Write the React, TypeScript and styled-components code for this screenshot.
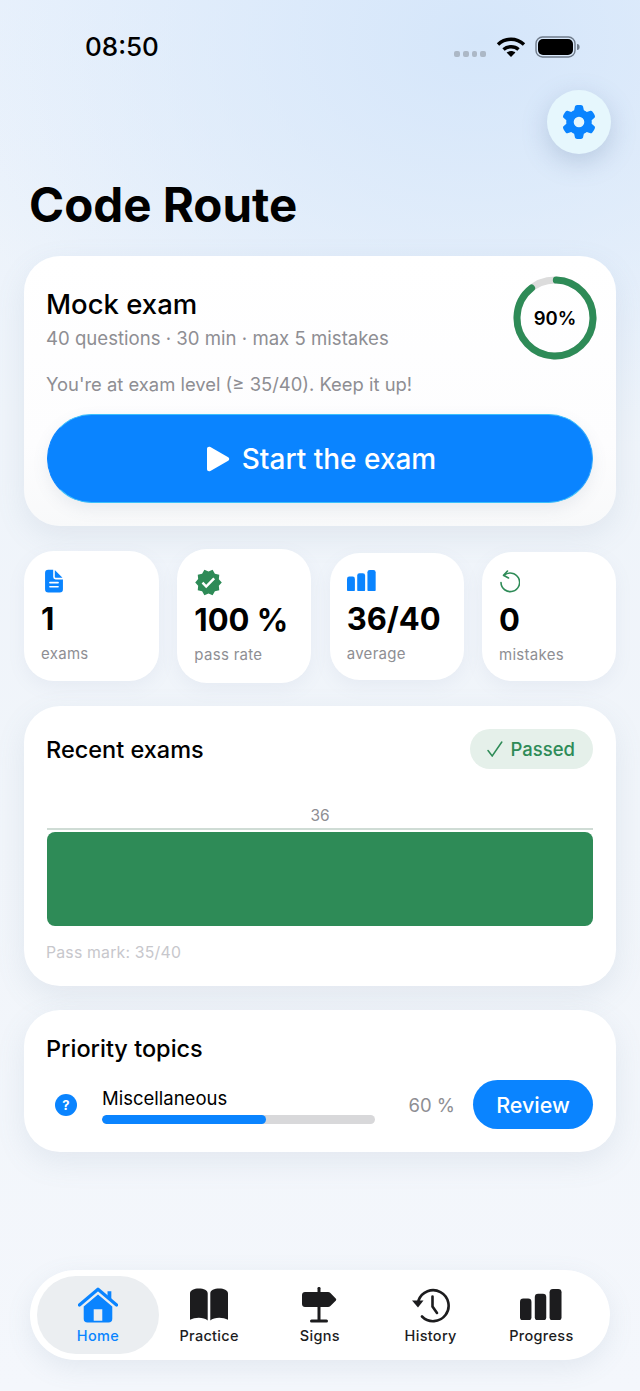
import React from 'react';
import styled, { createGlobalStyle } from 'styled-components';
import { FaGear } from 'react-icons/fa6';
import { MdVerified } from 'react-icons/md';
import { IoDocumentText } from 'react-icons/io5';

const blue = '#0a84ff';
const green = '#2e8b57';
const grey = '#8e8e93';

const GlobalStyle = createGlobalStyle`
	html, body {
		margin: 0;
		padding: 0;
		height: 100%;
	}
	body {
		font-family: 'Inter', 'Liberation Sans', sans-serif;
		color: #000;
		background: #f4f7fc;
	}
	* {
		box-sizing: border-box;
	}
`;

const Page = styled.div`
	width: 640px;
	height: 1391px;
	overflow: hidden;
	display: flex;
	flex-direction: column;
	background:
		radial-gradient(ellipse 560px 420px at 480px 40px, #d5e6fa 0%, rgba(213, 230, 250, 0) 100%),
		linear-gradient(180deg, #eaf2fc 0%, #eff4fa 30%, #f1f5fa 60%, #f4f7fc 100%);
`;

const StatusBar = styled.div`
	height: 90px;
	padding: 31px 59px 0 85px;
	display: flex;
	justify-content: space-between;
	align-items: flex-start;
`;

const Clock = styled.div`
	font-size: 26px;
	line-height: 32px;
	font-weight: 500;
`;

const StatusIcons = styled.div`
	display: flex;
	align-items: center;
	gap: 9px;
	height: 32px;
`;

const SignalDots = styled.div`
	display: flex;
	gap: 3px;
	margin-top: 14px;
	margin-right: 1px;
`;

const SignalDot = styled.span`
	width: 5.75px;
	height: 6px;
	border-radius: 2px;
	background: #acb8c6;
`;

const HeaderRow = styled.div`
	display: flex;
	justify-content: flex-end;
	padding-right: 29px;
`;

const GearButton = styled.div`
	width: 64px;
	height: 64px;
	border-radius: 50%;
	background: #e6f7fd;
	color: ${blue};
	display: flex;
	align-items: center;
	justify-content: center;
	box-shadow: 0 8px 26px rgba(90, 120, 160, 0.28);
`;

const Title = styled.h1`
	margin: 23px 0 23px 29px;
	font-size: 47.5px;
	line-height: 56px;
	font-weight: 700;
`;

const Card = styled.section`
	margin: 0 24px;
	padding: 23px;
	background: #fff;
	border-radius: 36px;
	box-shadow: 0 10px 30px rgba(110, 130, 160, 0.12);
`;

const ExamCard = styled(Card)`
	height: 270px;
	background: linear-gradient(180deg, #fff 0%, #fdfdfe 70%, #f8f9fa 100%);
`;

const ExamTop = styled.div`
	display: flex;
	justify-content: space-between;
	height: 93px;
`;

const CardTitle = styled.h2<{ $size?: number }>`
	margin: 0;
	font-size: ${(p) => p.$size || 23.5}px;
	line-height: 30px;
	font-weight: 500;
	margin-left: -1px;
`;

const ExamHead = styled.div`
	padding-top: 10px;
`;

const Meta = styled.div`
	margin-top: 7px;
	margin-left: -1px;
	font-size: 18.6px;
	line-height: 24px;
	color: ${grey};
`;

const Ring = styled.div`
	position: relative;
	width: 84px;
	height: 84px;
	margin: -3px -4px 0 0;
`;

const RingLabel = styled.div`
	position: absolute;
	inset: 0;
	display: flex;
	align-items: center;
	justify-content: center;
	font-size: 18.5px;
	font-weight: 600;
`;

const Hint = styled.div`
	margin-left: -1px;
	font-size: 18.4px;
	line-height: 24px;
	color: ${grey};
`;

const StartButton = styled.div`
	margin-top: 18px;
	height: 89px;
	padding-left: 2px;
	border-radius: 45px;
	background: ${blue};
	border: 1px solid #3cc0fb;
	border-left-color: ${blue};
	border-right-color: #2fa6fb;
	color: #fff;
	display: flex;
	align-items: center;
	justify-content: center;
	gap: 12px;
	font-size: 28px;
	font-weight: 500;
	box-shadow: 0 6px 16px rgba(90, 110, 140, 0.1);
`;

const StatsRow = styled.div`
	height: 134px;
	margin: 23px 24px;
	display: flex;
	align-items: center;
	justify-content: space-between;
`;

const StatCard = styled.div<{ $h: number; $w: number; $pad: number }>`
	width: ${(p) => p.$w}px;
	height: ${(p) => p.$h}px;
	padding: ${(p) => p.$pad}px 17px 0;
	background: #fff;
	border-radius: 30px;
	box-shadow: 0 6px 18px rgba(110, 130, 160, 0.08);
`;

const StatIcon = styled.div<{ $color: string }>`
	height: 30px;
	color: ${(p) => p.$color};
	display: flex;
	align-items: center;
`;

const StatValue = styled.div`
	margin-top: 3px;
	font-size: 31px;
	line-height: 40px;
	font-weight: 700;
	white-space: nowrap;
`;

const StatLabel = styled.div`
	margin-top: 5px;
	font-size: 15px;
	line-height: 20px;
	letter-spacing: 0.3px;
	color: ${grey};
`;

const RecentCard = styled(Card)`
	height: 280px;
	padding-top: 24px;
`;

const RecentHead = styled.div`
	display: flex;
	justify-content: space-between;
	align-items: center;
`;

const PassedBadge = styled.div`
	height: 40px;
	margin-top: -1px;
	padding: 0 18px 0 17px;
	border-radius: 20px;
	background: #e5f0ea;
	color: ${green};
	display: flex;
	align-items: center;
	gap: 7px;
	font-size: 18.5px;
	font-weight: 500;
`;

const BarValue = styled.div`
	margin-top: 37px;
	text-align: center;
	font-size: 15.5px;
	line-height: 20px;
	color: ${grey};
`;

const BarTrack = styled.div`
	margin-top: 2px;
	padding-top: 2px;
	border-top: 2px solid #cfdcd5;
`;

const Bar = styled.div`
	height: 94px;
	border-radius: 8px;
	background: ${green};
`;

const PassMark = styled.div`
	margin-top: 17px;
	margin-left: -1px;
	font-size: 15.8px;
	line-height: 20px;
	letter-spacing: 0.2px;
	color: #c7c7cc;
`;

const TopicsCard = styled(Card)`
	height: 142px;
	margin-top: 24px;
	padding-top: 24px;
`;

const TopicRow = styled.div`
	margin-top: 16px;
	display: flex;
	align-items: center;
`;

const TopicIcon = styled.div`
	width: 22px;
	height: 22px;
	margin-left: 8px;
	border-radius: 50%;
	background: ${blue};
	color: #fff;
	display: flex;
	align-items: center;
	justify-content: center;
	font-size: 13px;
	font-weight: 700;
`;

const TopicBody = styled.div`
	width: 273px;
	margin-left: 25px;
	padding-top: 2px;
`;

const TopicName = styled.div`
	font-size: 18.5px;
	line-height: 22px;
`;

const Progress = styled.div`
	height: 9px;
	margin-top: 6px;
	border-radius: 5px;
	background: #d8d8da;
	overflow: hidden;
`;

const ProgressFill = styled.div`
	height: 100%;
	border-radius: 5px;
	background: ${blue};
`;

const TopicPct = styled.div`
	margin-left: auto;
	font-size: 18.5px;
	color: ${grey};
`;

const ReviewButton = styled.div`
	width: 120px;
	height: 49px;
	margin-left: 18px;
	border-radius: 25px;
	background: ${blue};
	color: #fff;
	display: flex;
	align-items: center;
	justify-content: center;
	font-size: 21.5px;
	font-weight: 500;
`;

const TabBar = styled.nav`
	margin: auto 30px 31px;
	height: 90px;
	padding: 6px 0 6px 13px;
	border-radius: 45px;
	background: #fff;
	display: grid;
	grid-template-columns: repeat(5, 110.75px);
	box-shadow: 0 8px 26px rgba(110, 130, 160, 0.12);
`;

const Tab = styled.div<{ $active?: boolean }>`
	margin: ${(p) => (p.$active ? '0 -5px 0 -6px' : '0')};
	border-radius: 39px;
	background: ${(p) => (p.$active ? '#ebeef1' : 'transparent')};
	color: ${(p) => (p.$active ? blue : '#1c1c1e')};
	display: flex;
	flex-direction: column;
	align-items: center;
	padding-top: 10px;
	font-size: 14.5px;
	line-height: 18px;
	font-weight: 500;
	letter-spacing: 0.3px;
`;

const TabIcon = styled.div`
	height: 37px;
	margin-bottom: 4px;
	display: flex;
	align-items: center;
	justify-content: center;
`;

const WifiIcon = () => (
	<svg width="30" height="22" viewBox="0 0 30 22" fill="none" stroke="#000" strokeWidth="3.4">
		<path d="M2 8.5C9.5 1.5 20.5 1.5 28 8.5" />
		<path d="M7.5 13.5C11.5 9.8 18.5 9.8 22.5 13.5" />
		<path d="M15 21l-4.4-4.4c2.4-2 6.4-2 8.8 0z" fill="#000" stroke="none" />
	</svg>
);

const BatteryIcon = () => (
	<svg width="46" height="22" viewBox="0 0 46 22">
		<rect x="1" y="1" width="39" height="20" rx="6.5" fill="none" stroke="#6f7b8a" strokeWidth="1.4" />
		<rect x="3" y="3" width="35" height="16" rx="5" fill="#000" />
		<path d="M42 8c2 .3 2.6 1.4 2.6 3s-.6 2.7-2.6 3z" fill="#6f7b8a" />
	</svg>
);

const ProgressRing = ({ percent }: { percent: number }) => {
	const r = 38;
	const c = 2 * Math.PI * r;
	return (
		<svg width="84" height="84" viewBox="0 0 84 84">
			<circle cx="42" cy="42" r={r} fill="none" stroke="#dcdcdc" strokeWidth="7" />
			<circle
				cx="42"
				cy="42"
				r={r}
				fill="none"
				stroke={green}
				strokeWidth="7"
				strokeLinecap="round"
				strokeDasharray={`${(c * percent) / 100 - 3} ${c}`}
				transform="rotate(-88 42 42)"
			/>
		</svg>
	);
};

const PlayIcon = () => (
	<svg width="24" height="26" viewBox="0 0 24 26">
		<path d="M1 3C1 1 2.8.2 4.4 1.1l17.8 10.2c1.4.8 1.4 2.6 0 3.4L4.4 24.9C2.8 25.8 1 25 1 23z" fill="#fff" />
	</svg>
);

const CheckMark = () => (
	<svg width="16" height="16" viewBox="0 0 16 16" fill="none" stroke={green} strokeWidth="1.5" strokeLinecap="round">
		<path d="M1 9.5L5.2 15 14.800 1" />
	</svg>
);

const BarsIcon = ({ size = 28, color = 'currentColor' }: { size?: number; color?: string }) => (
	<svg width={size} height={size * 0.75} viewBox="0 0 44 33" fill={color}>
		<rect x="0" y="10" width="12" height="23" rx="3.5" />
		<rect x="15.5" y="5" width="12" height="28" rx="3.5" />
		<rect x="31" y="0" width="12.5" height="33" rx="3.5" />
	</svg>
);

const RetryIcon = () => (
	<svg width="21" height="24" viewBox="0 0 21 24" fill="none" stroke={green} strokeWidth="1.6" strokeLinecap="round" strokeLinejoin="round">
		<path d="M5 5.5A9.3 9.3 0 1 1 2 12.5" />
		<path d="M8.5 1L4.5 5.3l5 2.7" />
	</svg>
);

const HomeIcon = () => (
	<svg width="40" height="36" viewBox="0 0 42 37" fill="currentColor">
		<path d="M1.5 18.5L21 2 40.5 18.5" fill="none" stroke="currentColor" strokeWidth="3.4" strokeLinecap="round" strokeLinejoin="round" />
		<path d="M31 4h4v9l-4-3.5z" />
		<path fillRule="evenodd" d="M21 7.5L6 20v13a4 4 0 0 0 4 4h22a4 4 0 0 0 4-4V20zM16.5 23h9v12h-9z" />
	</svg>
);

const BookIcon = () => (
	<svg width="40" height="33" viewBox="0 0 40 33" fill="#1c1c1e">
		<path d="M18.7 5.5C18.7 2.5 15 .6 9.500.6 5.500.6 1 2.200 1 5.500v26.300c2.500-1.300 5.500-2 8.800-2 3.500 0 7 .9 8.900 2.700z" />
		<path d="M21.3 5.5C21.3 2.5 25 .6 30.500.6c4 0 8.500 1.600 8.500 4.900v26.300c-2.500-1.300-5.500-2-8.800-2-3.500 0-7 .9-8.900 2.700z" />
	</svg>
);

const SignIcon = () => (
	<svg width="35" height="36" viewBox="0 0 35 36" fill="#1c1c1e">
		<rect x="15.5" y="0" width="3" height="34" rx="1.2" />
		<path d="M3 5h23c1 0 1.700.3 2.400 1l5.300 5.500c.7.700.7 1.500 0 2.200L28.400 19c-.7.700-1.400 1-2.400 1H3c-1.700 0-3-1.300-3-3V8c0-1.700 1.300-3 3-3z" />
		<rect x="8" y="32.5" width="18" height="3" rx="1.5" />
	</svg>
);

const HistoryIcon = () => (
	<svg width="38" height="36" viewBox="0 0 38 36" fill="none" stroke="#1c1c1e" strokeWidth="2.6" strokeLinecap="round">
		<path d="M6.5 13.5A15.500 15.500 0 1 1 10 29.500" />
		<path d="M20.500 9.500v10l4.500 6.500" />
		<path d="M0 13.500l6 7 5.500-7z" fill="#1c1c1e" stroke="none" />
	</svg>
);

const stats = [
	{ value: '1', label: 'exams', w: 135, h: 130, pad: 15, color: blue, icon: <IoDocumentText size={26} /> },
	{ value: '100 %', label: 'pass rate', w: 134, h: 134, pad: 18, color: green, icon: <MdVerified size={29} /> },
	{ value: '36/40', label: 'average', w: 134, h: 127, pad: 13, color: blue, icon: <BarsIcon size={29} /> },
	{ value: '0', label: 'mistakes', w: 134, h: 129, pad: 15, color: green, icon: <RetryIcon /> },
];

const tabs = [
	{ label: 'Home', icon: <HomeIcon />, active: true },
	{ label: 'Practice', icon: <BookIcon /> },
	{ label: 'Signs', icon: <SignIcon /> },
	{ label: 'History', icon: <HistoryIcon /> },
	{ label: 'Progress', icon: <BarsIcon size={42} color="#1c1c1e" /> },
];

const App = () => (
	<Page>
		<GlobalStyle />
		<StatusBar>
			<Clock>08:50</Clock>
			<StatusIcons>
				<SignalDots>
					{[0, 1, 2, 3].map((i) => (
						<SignalDot key={i} />
					))}
				</SignalDots>
				<WifiIcon />
				<BatteryIcon />
			</StatusIcons>
		</StatusBar>
		<HeaderRow>
			<GearButton>
				<FaGear size={34} />
			</GearButton>
		</HeaderRow>
		<Title>Code Route</Title>

		<ExamCard>
			<ExamTop>
				<ExamHead>
					<CardTitle $size={27.5}>Mock exam</CardTitle>
					<Meta>40 questions · 30 min · max 5 mistakes</Meta>
				</ExamHead>
				<Ring>
					<ProgressRing percent={90} />
					<RingLabel>90%</RingLabel>
				</Ring>
			</ExamTop>
			<Hint>You're at exam level (≥ 35/40). Keep it up!</Hint>
			<StartButton>
				<PlayIcon />
				Start the exam
			</StartButton>
		</ExamCard>

		<StatsRow>
			{stats.map((s) => (
				<StatCard key={s.label} $w={s.w} $h={s.h} $pad={s.pad}>
					<StatIcon $color={s.color}>{s.icon}</StatIcon>
					<StatValue>{s.value}</StatValue>
					<StatLabel>{s.label}</StatLabel>
				</StatCard>
			))}
		</StatsRow>

		<RecentCard>
			<RecentHead>
				<CardTitle>Recent exams</CardTitle>
				<PassedBadge>
					<CheckMark />
					Passed
				</PassedBadge>
			</RecentHead>
			<BarValue>36</BarValue>
			<BarTrack>
				<Bar />
			</BarTrack>
			<PassMark>Pass mark: 35/40</PassMark>
		</RecentCard>

		<TopicsCard>
			<CardTitle>Priority topics</CardTitle>
			<TopicRow>
				<TopicIcon>?</TopicIcon>
				<TopicBody>
					<TopicName>Miscellaneous</TopicName>
					<Progress>
						<ProgressFill style={{ width: '60%' }} />
					</Progress>
				</TopicBody>
				<TopicPct>60 %</TopicPct>
				<ReviewButton>Review</ReviewButton>
			</TopicRow>
		</TopicsCard>

		<TabBar>
			{tabs.map((t) => (
				<Tab key={t.label} $active={t.active}>
					<TabIcon>{t.icon}</TabIcon>
					{t.label}
				</Tab>
			))}
		</TabBar>
	</Page>
);

export default App;
